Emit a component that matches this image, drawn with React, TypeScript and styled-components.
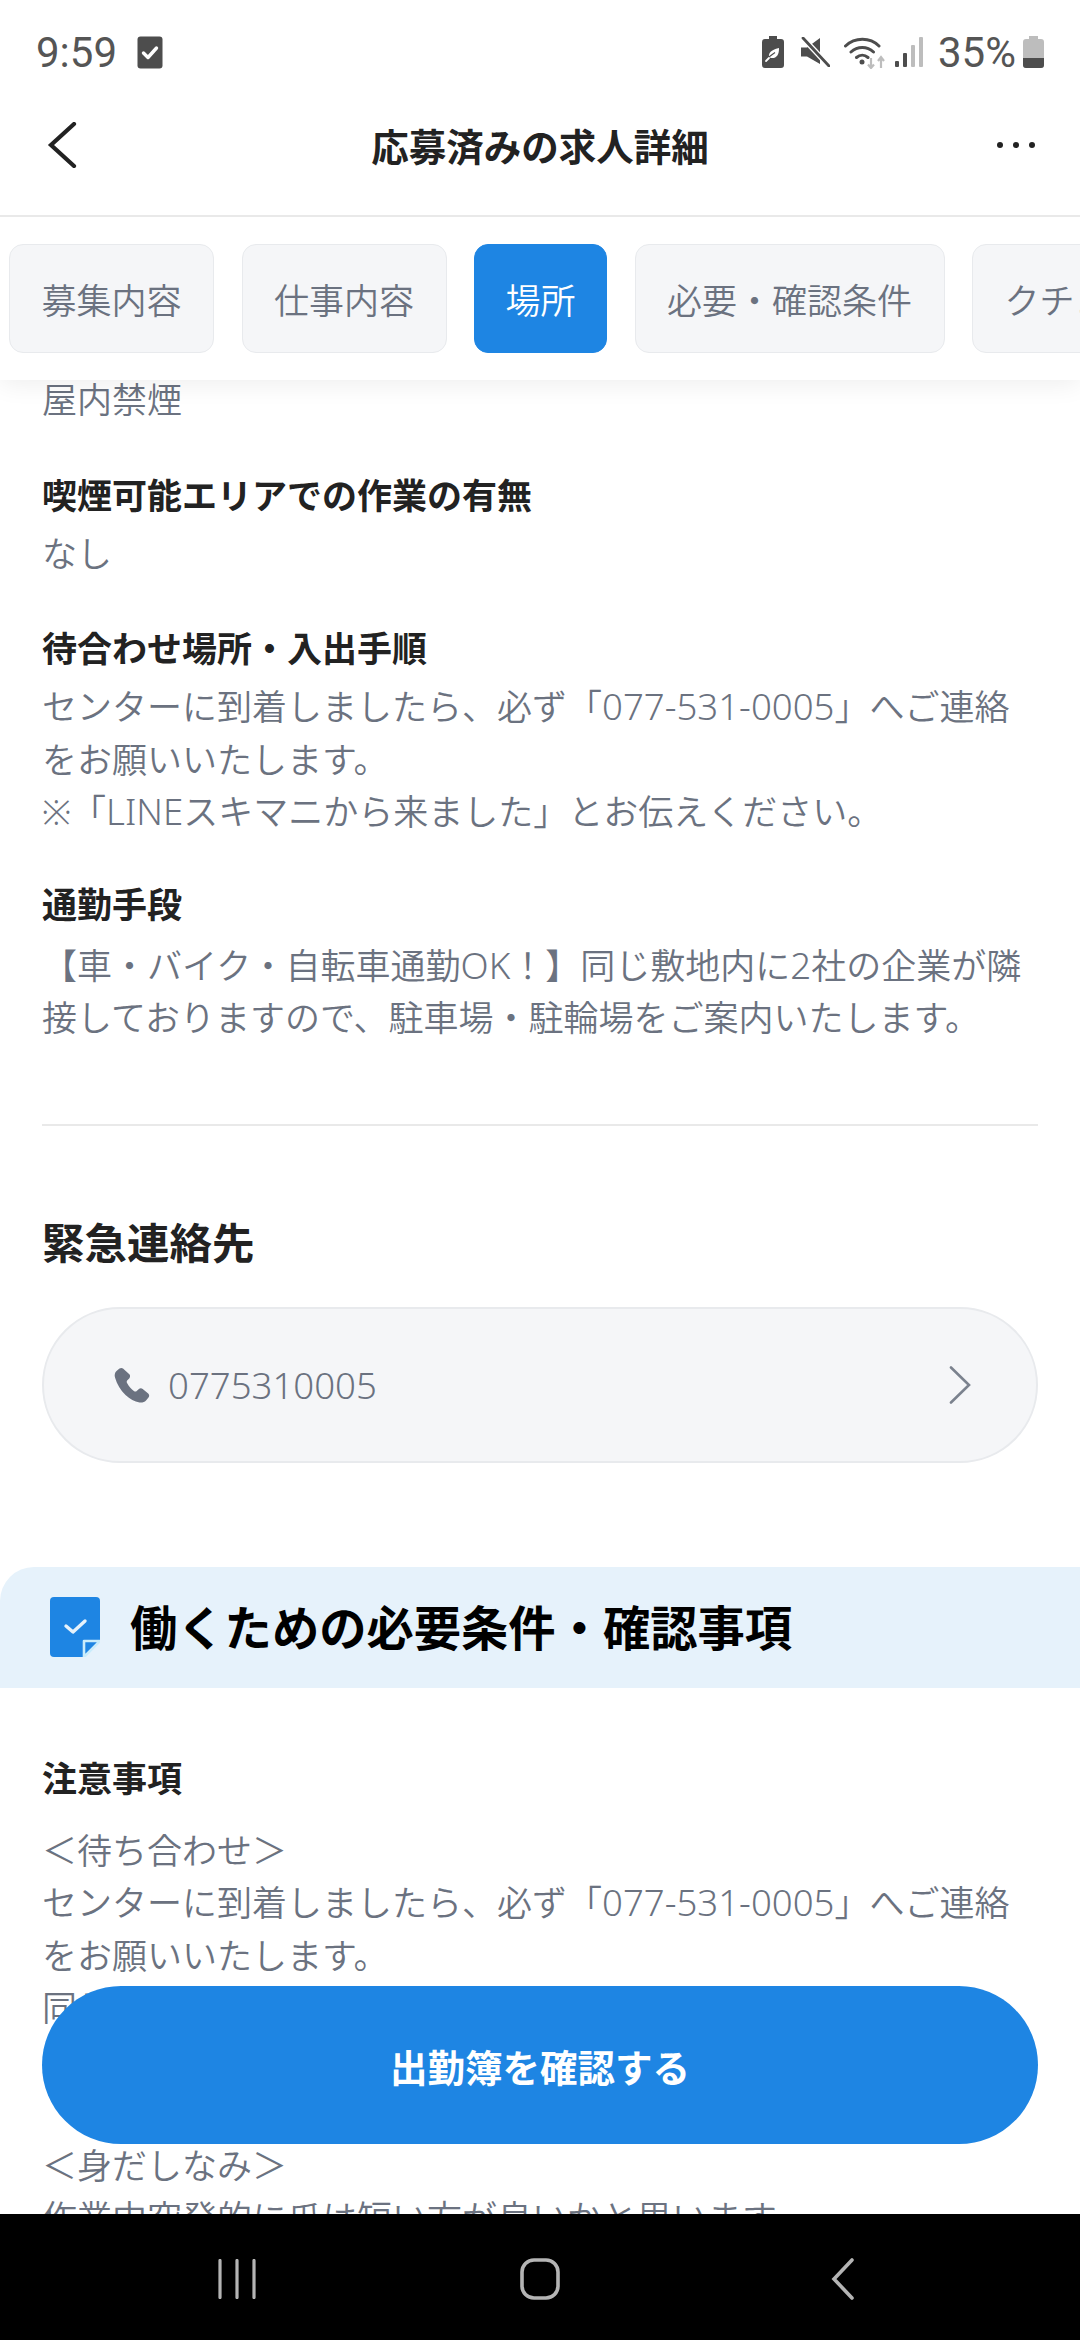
import React from 'react';
import styled, { createGlobalStyle } from 'styled-components';

const FONT = `"Noto Sans", "Noto Sans CJK JP", sans-serif`;

const GlobalStyle = createGlobalStyle`
  html, body {
    margin: 0;
    padding: 0;
    background: #fff;
  }
  * {
    box-sizing: border-box;
  }
`;

const Page = styled.div`
  position: relative;
  display: flex;
  flex-direction: column;
  width: 1080px;
  height: 2340px;
  overflow: hidden;
  background: #fff;
  font-family: ${FONT};
`;

const TopArea = styled.div`
  position: relative;
  z-index: 2;
  flex: none;
  background: #fff;
  box-shadow: 0 4px 24px rgba(0, 0, 0, 0.07);
`;

const StatusBar = styled.div`
  display: flex;
  align-items: center;
  justify-content: space-between;
  height: 100px;
  padding: 4px 36px 0 36px;
`;

const StatusGroup = styled.div`
  display: flex;
  align-items: center;
`;

const Time = styled.span`
  font-family: Roboto, sans-serif;
  font-size: 42px;
  color: #555;
  margin-right: 20px;
`;

const Percent = styled.span`
  font-family: Roboto, sans-serif;
  font-size: 42px;
  color: #555;
  margin: 0 7px 0 15px;
`;

const StatusIcon = styled.svg<{ $gap?: number }>`
  display: block;
  flex: none;
  margin-right: ${p => p.$gap ?? 0}px;
`;

const Header = styled.div`
  position: relative;
  display: flex;
  align-items: center;
  justify-content: space-between;
  height: 117px;
  padding: 0 44px 26px 47px;
  border-bottom: 2px solid #e9e9e9;
`;

const HeaderTitle = styled.h1`
  position: absolute;
  left: 0;
  right: 0;
  margin: 0;
  text-align: center;
  font-size: 37.5px;
  font-weight: 700;
  color: #222;
`;

const TabBar = styled.div`
  display: flex;
  gap: 27.5px;
  height: 163px;
  padding: 27px 0 0 9px;
  overflow: hidden;
`;

const Tab = styled.div<{ $active?: boolean }>`
  flex: none;
  display: flex;
  align-items: center;
  height: 109px;
  padding: 0 ${p => (p.$active ? 30.5 : 31.5)}px;
  border-radius: 14px;
  border: 1px solid ${p => (p.$active ? '#1e85e3' : '#e8eaed')};
  background: ${p => (p.$active ? '#1e85e3' : '#f5f6f8')};
  color: ${p => (p.$active ? '#fff' : '#6b7280')};
  font-size: 35px;
  font-weight: 350;
`;

const Scroll = styled.main`
  flex: 1;
  min-height: 0;
  overflow: hidden;
`;

const Inner = styled.div`
  margin-top: -6px;
`;

const Padded = styled.div`
  padding: 0 42px;
`;

const Body = styled.p`
  margin: 0;
  font-size: 35px;
  font-weight: 350;
  line-height: 52.5px;
  color: #6b7280;
  white-space: pre-line;
`;

const Latin = styled.span`
  font-size: 36.6px;
  line-height: 1;
`;

const Field = styled.div<{ $top?: number }>`
  margin-top: ${p => p.$top ?? 43}px;
`;

const FieldLabel = styled.h3<{ $gap?: number }>`
  margin: 0 0 ${p => p.$gap ?? 6}px;
  font-size: 35px;
  line-height: 52px;
  font-weight: 700;
  color: #222;
`;

const Divider = styled.hr`
  margin: 79px 0 0;
  border: none;
  border-top: 2px solid #e9e9e9;
`;

const SectionTitle = styled.h2`
  margin: 86px 0 33px;
  font-size: 42.5px;
  line-height: 62px;
  font-weight: 700;
  color: #222;
`;

const PhonePill = styled.div`
  display: flex;
  align-items: center;
  height: 156px;
  padding: 0 64px 0 70px;
  border-radius: 78px;
  border: 2px solid #e8eaed;
  background: #f5f6f8;
`;

const PhoneNumber = styled.span`
  flex: 1;
  margin-left: 18px;
  font-size: 36.6px;
  font-weight: 350;
  color: #6b7280;
`;

const Band = styled.div`
  display: flex;
  align-items: center;
  gap: 30px;
  height: 121px;
  margin-top: 104px;
  padding-left: 50px;
  border-top-left-radius: 34px;
  background: #e6f2fb;
`;

const BandTitle = styled.h2`
  margin: 0 0 3px;
  font-size: 47.3px;
  font-weight: 700;
  color: #000;
`;

const NoticeBlock = styled.div`
  margin-top: 65px;
`;

const ActionButton = styled.button`
  position: absolute;
  z-index: 3;
  left: 42px;
  top: 1986px;
  width: 996px;
  height: 158px;
  border: none;
  border-radius: 79px;
  background: #1e85e3;
  color: #fff;
  font-family: ${FONT};
  font-size: 37.5px;
  font-weight: 700;
`;

const NavBar = styled.nav`
  position: relative;
  z-index: 4;
  flex: none;
  display: grid;
  grid-template-columns: repeat(3, 303px);
  justify-items: center;
  align-items: center;
  height: 126px;
  padding: 4px 0 0 85px;
  background: #000;
  color: #b4b4b4;
`;

export default function App() {
  return (
    <>
      <GlobalStyle />
      <Page>
        <TopArea>
          <StatusBar>
            <StatusGroup>
              <Time>9:59</Time>
              <StatusIcon width="26" height="33" viewBox="0 0 26 33">
                <rect x="0.5" y="0.5" width="25" height="32" rx="3" fill="#4d4d4d" />
                <path d="M6.5 17l4.5 4.5 8.500-9.500" fill="none" stroke="#fff" strokeWidth="3.400" strokeLinecap="round" strokeLinejoin="round" />
              </StatusIcon>
            </StatusGroup>
            <StatusGroup>
              <StatusIcon $gap={17} width="22" height="32" viewBox="0 0 22 32">
                <path d="M7 0h8v3h4a3 3 0 0 1 3 3v23a3 3 0 0 1-3 3H3a3 3 0 0 1-3-3V6a3 3 0 0 1 3-3h4z" fill="#4d4d4d" />
                <path d="M7 21c-.5-4 1.500-7 10-9 .2 7-2.500 10.500-8 10z" fill="#fff" />
                <path d="M4 25c2.500-4 5.500-6.500 9-8.500" fill="none" stroke="#4d4d4d" strokeWidth="1.400" />
                <path d="M4 25l3-3" fill="none" stroke="#fff" strokeWidth="1.800" strokeLinecap="round" />
              </StatusIcon>
              <StatusIcon $gap={14} width="29" height="30" viewBox="0 0 29 30">
                <path d="M0 10.500h6L19 1v26L6 19.500H0z" fill="#4d4d4d" />
                <path d="M2 1l26 28" stroke="#fff" strokeWidth="5.500" />
                <path d="M2 1l26 28" stroke="#4d4d4d" strokeWidth="2.800" strokeLinecap="round" />
              </StatusIcon>
              <StatusIcon $gap={9} width="42" height="33" viewBox="0 0 42 33">
                <path d="M1.500 10C11 1 26 1 35 10M7 16c6.500-6 16-6 22.500 0M12.500 21.500c3.500-3 8-3 11.500 0" fill="none" stroke="#4d4d4d" strokeWidth="3" strokeLinecap="round" />
                <circle cx="18" cy="26" r="2.500" fill="#4d4d4d" />
                <path d="M27 22v10M24 28.500l3 3.500 3-3.500" fill="none" stroke="#bdbdbd" strokeWidth="2.200" />
                <path d="M37 32V21M34 25l3-4 3 4" fill="none" stroke="#bdbdbd" strokeWidth="2.200" />
              </StatusIcon>
              <StatusIcon width="28" height="30" viewBox="0 0 28 30">
                <rect x="0" y="24" width="4" height="6" rx="1" fill="#4d4d4d" />
                <rect x="8" y="16" width="4" height="14" rx="1" fill="#4d4d4d" />
                <rect x="16" y="8" width="4" height="22" rx="1" fill="#bdbdbd" />
                <rect x="24" y="0" width="4" height="30" rx="1" fill="#bdbdbd" />
              </StatusIcon>
              <Percent>35%</Percent>
              <StatusIcon width="21" height="32" viewBox="0 0 21 32">
                <path d="M6 0h9v3h3a3 3 0 0 1 3 3v23a3 3 0 0 1-3 3H3a3 3 0 0 1-3-3V6a3 3 0 0 1 3-3h3z" fill="#bdbdbd" />
                <path d="M0 22h21v7a3 3 0 0 1-3 3H3a3 3 0 0 1-3-3z" fill="#4d4d4d" />
              </StatusIcon>
            </StatusGroup>
          </StatusBar>
          <Header>
            <svg width="30" height="46" viewBox="0 0 30 46">
              <path d="M27 2L4 23l23 21" fill="none" stroke="#222" strokeWidth="4.200" strokeLinecap="round" />
            </svg>
            <HeaderTitle>応募済みの求人詳細</HeaderTitle>
            <svg width="40" height="8" viewBox="0 0 40 8">
              <circle cx="4" cy="4" r="3" fill="#222" />
              <circle cx="20" cy="4" r="3" fill="#222" />
              <circle cx="36" cy="4" r="3" fill="#222" />
            </svg>
          </Header>
          <TabBar>
            <Tab>募集内容</Tab>
            <Tab>仕事内容</Tab>
            <Tab $active>場所</Tab>
            <Tab>必要・確認条件</Tab>
            <Tab>クチコミ</Tab>
          </TabBar>
        </TopArea>

        <Scroll>
          <Inner>
            <Padded>
              <Body>屋内禁煙</Body>
              <Field>
                <FieldLabel>喫煙可能エリアでの作業の有無</FieldLabel>
                <Body>なし</Body>
              </Field>
              <Field>
                <FieldLabel>待合わせ場所・入出手順</FieldLabel>
                <Body>
                  センターに到着しましたら、必ず「<Latin>077-531-0005</Latin>」へご連絡をお願いいたします。{'\n'}※「<Latin>LINE</Latin>スキマニから来ました」とお伝えください。
                </Body>
              </Field>
              <Field $top={40}>
                <FieldLabel $gap={9}>通勤手段</FieldLabel>
                <Body>【車・バイク・自転車通勤<Latin>OK</Latin>！】同じ敷地内に<Latin>2</Latin>社の企業が隣接しておりますので、駐車場・駐輪場をご案内いたします。</Body>
              </Field>
              <Divider />
              <SectionTitle>緊急連絡先</SectionTitle>
              <PhonePill>
                <svg width="36" height="36" viewBox="0 0 36 36">
                  <path d="M9 1.500c-1-.8-2.500-.7-3.500 .1L2.500 4C.8 5.500 .3 8 1 10.500c2 7 5.500 12.500 10.500 17.500 4.500 4.300 9 6.500 14 7.500 2.500 .4 5-.3 6.500-2l2.500-3c1-1.200 .9-3-.3-4l-5.500-4.500c-1.100-.9-2.700-.9-3.800 0l-2.200 2c-.7 .6-1.700 .7-2.500 .2-3-2.200-5.500-5-7.300-8.500-.4-.9-.2-1.900 .5-2.500l1.800-1.800c1-1 1.200-2.600 .4-3.800z" fill="#6b7280" />
                </svg>
                <PhoneNumber>0775310005</PhoneNumber>
                <svg width="24" height="38" viewBox="0 0 24 38">
                  <path d="M3 1.500L21 19 3 36.500" fill="none" stroke="#7b828e" strokeWidth="2.600" strokeLinecap="round" />
                </svg>
              </PhonePill>
            </Padded>
            <Band>
              <svg width="50" height="60" viewBox="0 0 50 60">
                <path d="M4 0h42a4 4 0 0 1 4 4v40L34 60H4a4 4 0 0 1-4-4V4a4 4 0 0 1 4-4z" fill="#1e85e3" />
                <path d="M16 29l7 6 12-11" fill="none" stroke="#e6f2fb" strokeWidth="3.400" strokeLinecap="round" strokeLinejoin="round" />
                <path d="M34 44h16L34 60z" fill="#1e85e3" stroke="#c9ecfb" strokeWidth="2.600" strokeLinejoin="round" />
              </svg>
              <BandTitle>働くための必要条件・確認事項</BandTitle>
            </Band>
            <Padded>
              <NoticeBlock>
                <FieldLabel $gap={20}>注意事項</FieldLabel>
                <Body>
                  ＜待ち合わせ＞{'\n'}センターに到着しましたら、必ず「<Latin>077-531-0005</Latin>」へご連絡をお願いいたします。{'\n'}同じ敷地内に<Latin>2</Latin>社の企業が隣接しておりますので、{'\n'}お間違えのないようお願いいたします。{'\n\n'}＜身だしなみ＞{'\n'}作業中突発的に爪は短い方が良いかと思います。
                </Body>
              </NoticeBlock>
            </Padded>
          </Inner>
        </Scroll>

        <ActionButton>出勤簿を確認する</ActionButton>

        <NavBar>
          <svg width="38" height="40" viewBox="0 0 38 40">
            <path d="M2 1.500v37M19 1.500v37M36 1.500v37" stroke="currentColor" strokeWidth="3.200" strokeLinecap="round" />
          </svg>
          <svg width="40" height="42" viewBox="0 0 40 42">
            <rect x="2" y="2" width="36" height="38" rx="12" fill="none" stroke="currentColor" strokeWidth="3.600" />
          </svg>
          <svg width="24" height="42" viewBox="0 0 24 42">
            <path d="M21 2L3 21l18 19" fill="none" stroke="currentColor" strokeWidth="3.600" strokeLinecap="round" />
          </svg>
        </NavBar>
      </Page>
    </>
  );
}
